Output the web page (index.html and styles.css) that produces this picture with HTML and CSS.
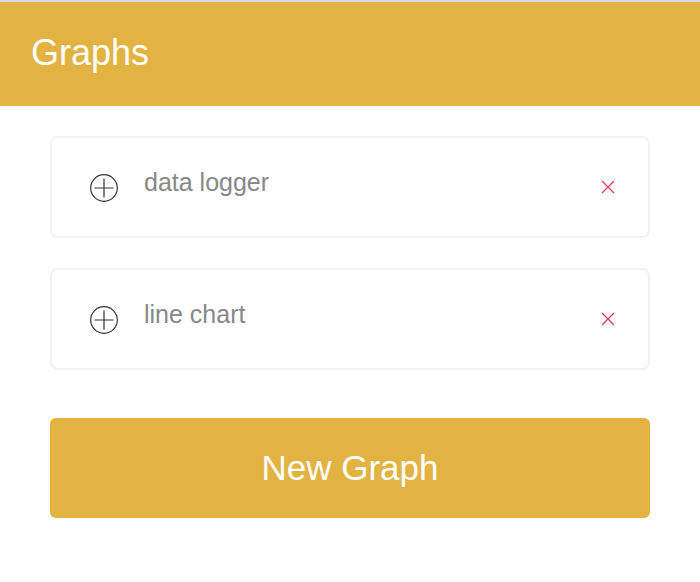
FILE: index.html
```html
<!DOCTYPE html>
<html>
<head>
<meta charset="utf-8">
<link rel="stylesheet" href="styles.css">
</head>
<body>
<header class="topbar">
  <h1 class="title">Graphs</h1>
</header>
<main class="content">
  <div class="card">
    <svg class="add-icon" viewBox="0 0 28 28" width="28" height="28">
      <circle cx="14" cy="14" r="13.3" fill="none" stroke="#333" stroke-width="1.2"/>
      <path d="M14 4.5V23.5M4.5 14H23.5" stroke="#333" stroke-width="1.2" fill="none"/>
    </svg>
    <span class="label">data logger</span>
    <svg class="close-icon" viewBox="0 0 14 14" width="14" height="14">
      <path d="M1 1L13 13M13 1L1 13" stroke="#d8405c" stroke-width="1.3" fill="none"/>
    </svg>
  </div>
  <div class="card">
    <svg class="add-icon" viewBox="0 0 28 28" width="28" height="28">
      <circle cx="14" cy="14" r="13.3" fill="none" stroke="#333" stroke-width="1.2"/>
      <path d="M14 4.5V23.5M4.5 14H23.5" stroke="#333" stroke-width="1.2" fill="none"/>
    </svg>
    <span class="label">line chart</span>
    <svg class="close-icon" viewBox="0 0 14 14" width="14" height="14">
      <path d="M1 1L13 13M13 1L1 13" stroke="#d8405c" stroke-width="1.3" fill="none"/>
    </svg>
  </div>
  <button class="new-btn">New Graph</button>
</main>
</body>
</html>
```
FILE: styles.css
```css
* { box-sizing: border-box; }
html, body {
  margin: 0;
  padding: 0;
  background: #ffffff;
  font-family: "Liberation Sans", Arial, sans-serif;
}
.topbar {
  height: 106px;
  background: #e2b343;
  border-top: 2px solid #d9d9d9;
  display: flex;
  align-items: center;
  padding-left: 31px;
  padding-bottom: 2px;
}
.title {
  margin: 0;
  color: #ffffff;
  font-weight: normal;
  font-size: 36px;
}
.content {
  padding: 30px 50px 0 50px;
  display: flex;
  flex-direction: column;
}
.card {
  height: 102px;
  border: 2px solid #f2f2f2;
  border-radius: 8px;
  display: flex;
  align-items: center;
  padding-left: 38px;
  padding-right: 33px;
  margin-bottom: 30px;
}
.add-icon {
  flex: none;
  margin-top: 2px;
}
.label {
  flex: 1;
  margin-left: 26px;
  margin-bottom: 10px;
  font-size: 25px;
  color: #888888;
}
.close-icon {
  flex: none;
}
.new-btn {
  margin-top: 18px;
  height: 100px;
  border: none;
  border-radius: 6px;
  background: #e2b343;
  color: #ffffff;
  font-family: "Liberation Sans", Arial, sans-serif;
  font-size: 35px;
  padding: 0;
  cursor: pointer;
}
```
